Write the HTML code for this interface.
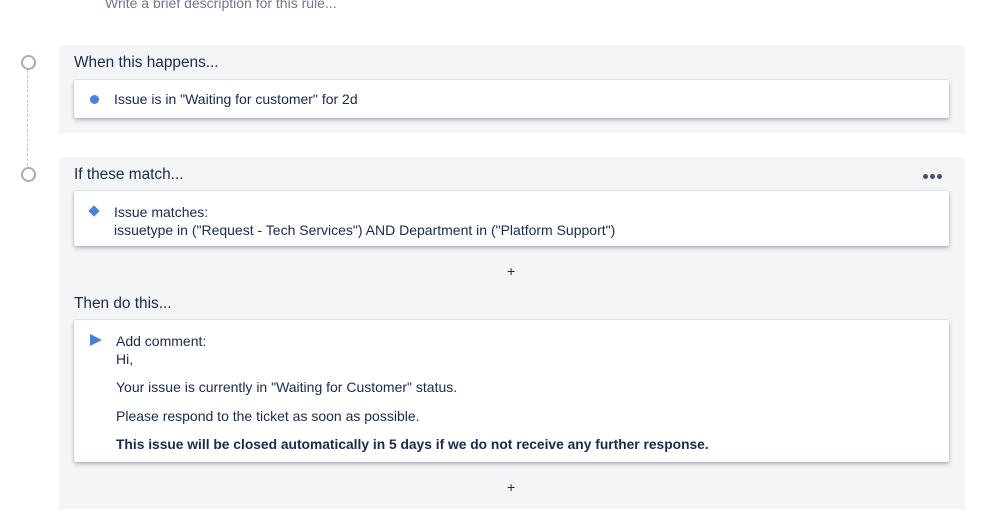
<!DOCTYPE html>
<html><head><style>
body{margin:0;width:999px;height:530px;background:#fff;font-family:"Liberation Sans",sans-serif;color:#172b4d;position:relative;overflow:hidden}
.a{position:absolute}
.panel{position:absolute;left:59px;width:906px;background:#f4f5f7;border-radius:3px}
.card{position:absolute;left:74px;width:875px;background:#fff;border-radius:2px;box-shadow:0 2px 4px rgba(9,30,66,.3),0 0 1px rgba(9,30,66,.3)}
.h{position:absolute;left:74px;font-size:15.4px}
.t{font-size:14px;position:absolute}
.circ{position:absolute;left:21px;width:11px;height:11px;border:2px solid #a5adba;border-radius:50%;background:#fff}
.dot{position:absolute;top:174px;width:5px;height:5px;border-radius:50%;background:#42526e}
</style></head><body>
<div class="a" style="left:105px;top:-5px;font-size:14px;color:#6b778c">Write a brief description for this rule...</div>
<div class="a" style="left:27px;top:70px;height:96px;border-left:1px dashed #c1c7d0"></div>
<div class="circ" style="top:55px"></div>
<div class="circ" style="top:167px"></div>
<div class="panel" style="top:45px;height:88px"></div>
<div class="panel" style="top:157px;height:352px"></div>
<div class="h" style="top:54px">When this happens...</div>
<div class="h" style="top:166px">If these match...</div>
<div class="h" style="top:295px">Then do this...</div>
<div class="dot" style="left:923px"></div><div class="dot" style="left:930px"></div><div class="dot" style="left:937px"></div>
<div class="card" style="top:80px;height:38px"></div>
<div class="a" style="left:90px;top:95px;width:9px;height:9px;border-radius:50%;background:#4a7fdc"></div>
<div class="t" style="left:114px;top:91px">Issue is in "Waiting for customer" for 2d</div>
<div class="card" style="top:191px;height:55px"></div>
<div class="a" style="left:90px;top:207px;width:8px;height:8px;background:#4a7fdc;transform:rotate(45deg)"></div>
<div class="t" style="left:114px;top:203px;line-height:18px">Issue matches:<br>issuetype in ("Request - Tech Services") AND Department in ("Platform Support")</div>
<div class="t" style="left:507px;top:263px">+</div>
<div class="card" style="top:320px;height:142px"></div>
<div class="a" style="left:90px;top:334px;width:0;height:0;border-left:12px solid #4a7fdc;border-top:6px solid transparent;border-bottom:6px solid transparent"></div>
<div class="t" style="left:116px;top:332px;line-height:18px">Add comment:<br>Hi,</div>
<div class="t" style="left:116px;top:379px">Your issue is currently in "Waiting for Customer" status.</div>
<div class="t" style="left:116px;top:408px">Please respond to the ticket as soon as possible.</div>
<div class="t" style="left:116px;top:437px;font-weight:bold;font-size:13.8px">This issue will be closed automatically in 5 days if we do not receive any further response.</div>
<div class="t" style="left:507px;top:479px">+</div>
</body></html>
